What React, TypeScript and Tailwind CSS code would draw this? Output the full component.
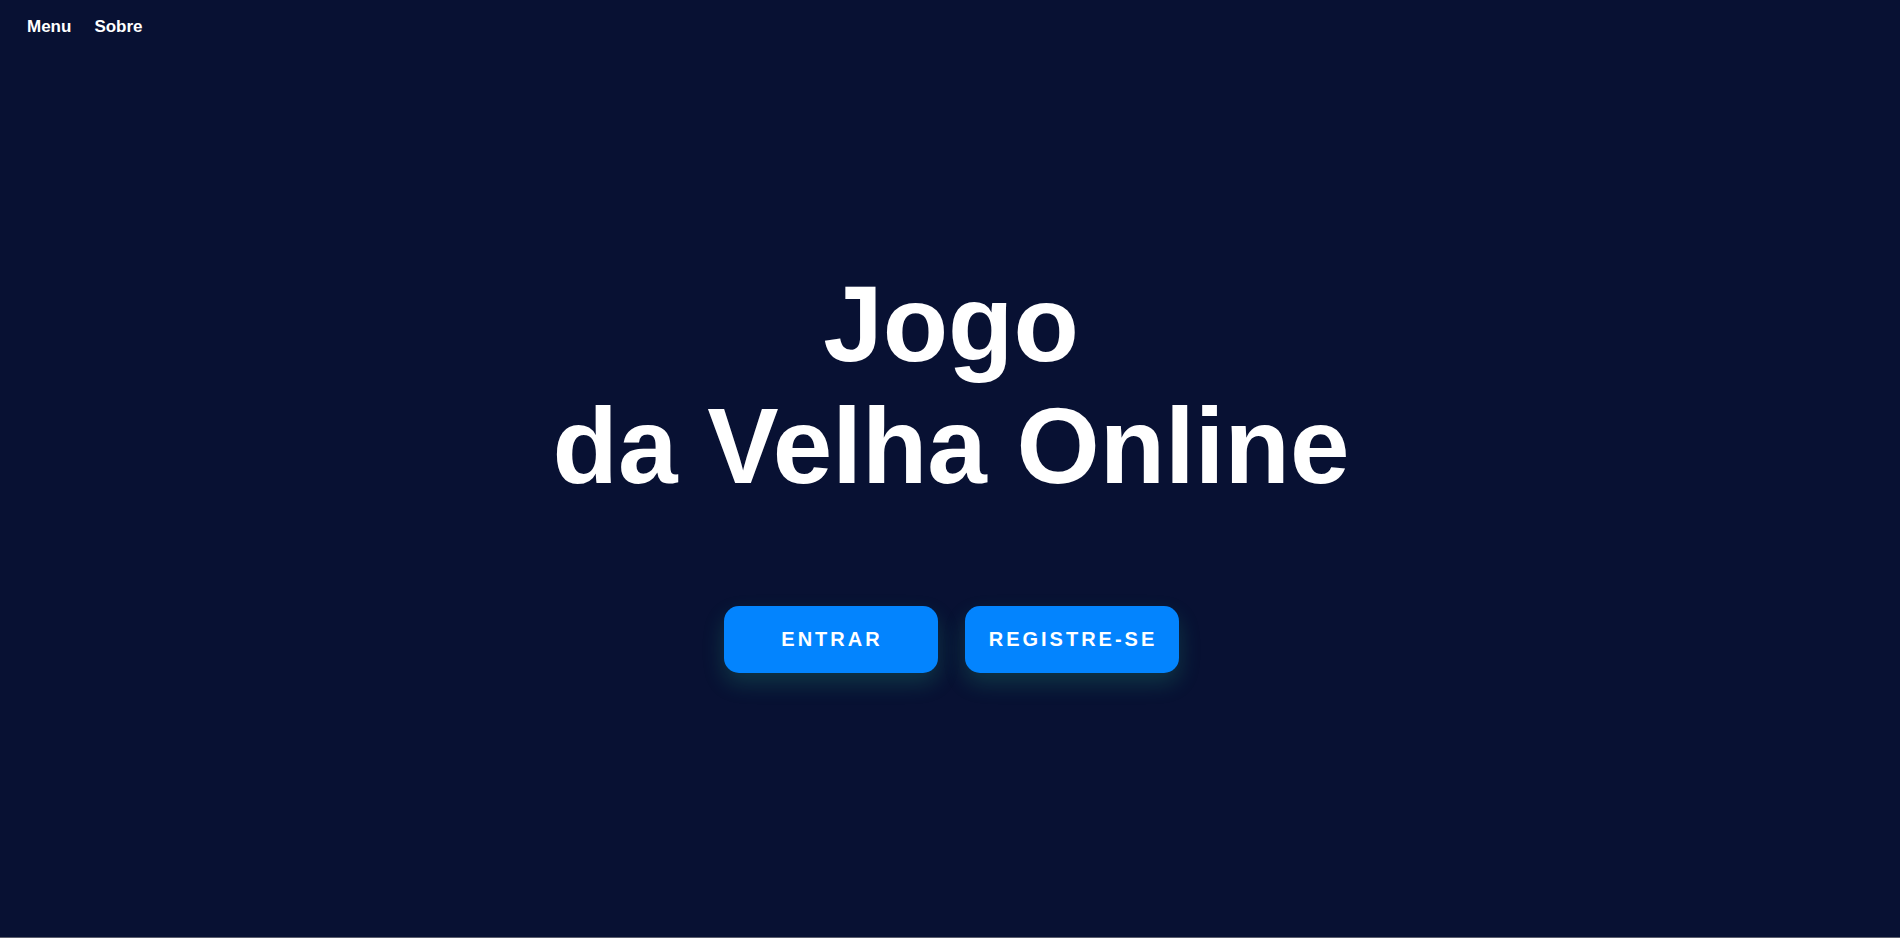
export default function App() {
  return (
    <div className="flex h-[938px] w-full flex-col bg-[#081133] font-['Liberation_Sans',Arial,sans-serif] text-white border-b border-[#5c5f6e]">
      <header className="flex h-[50px] items-start gap-[23px] px-[27px] pt-[14px] text-[17px] font-bold">
        <a href="#" className="leading-normal">Menu</a>
        <a href="#" className="leading-normal">Sobre</a>
      </header>

      <main className="flex flex-1 flex-col items-center justify-center pb-[50px] pl-[2px]">
        <h1 className="text-center text-[107px] font-bold leading-[1.14]">
          Jogo
          <br />
          da Velha Online
        </h1>

        <div className="mt-[98px] flex gap-[27px]">
          <button className="h-[67px] w-[214px] rounded-[15px] bg-[#0384fe] pl-[3px] text-[20px] font-bold uppercase tracking-[3px] text-white shadow-[0_10px_22px_rgba(46,229,157,0.18)]">
            Entrar
          </button>
          <button className="h-[67px] w-[214px] rounded-[15px] bg-[#0384fe] pl-[3px] text-[20px] font-bold uppercase tracking-[3px] text-white shadow-[0_10px_22px_rgba(46,229,157,0.18)]">
            Registre-se
          </button>
        </div>
      </main>
    </div>
  );
}
